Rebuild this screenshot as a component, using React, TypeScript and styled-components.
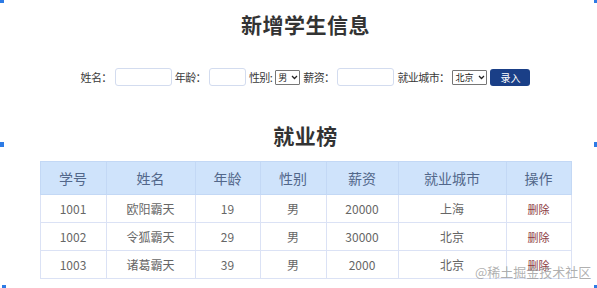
import React from "react";
import { styled, createGlobalStyle } from "styled-components";

type Student = {
  id: string;
  name: string;
  age: number;
  sex: string;
  salary: number;
  city: string;
};

const students: Student[] = [
  { id: "1001", name: "欧阳霸天", age: 19, sex: "男", salary: 20000, city: "上海" },
  { id: "1002", name: "令狐霸天", age: 29, sex: "男", salary: 30000, city: "北京" },
  { id: "1003", name: "诸葛霸天", age: 39, sex: "男", salary: 2000, city: "北京" },
];

const columns = [
  { title: "学号", width: 66 },
  { title: "姓名", width: 89 },
  { title: "年龄", width: 65 },
  { title: "性别", width: 66 },
  { title: "薪资", width: 72 },
  { title: "就业城市", width: 108 },
  { title: "操作", width: 65 },
];

const Chevron = () => (
  <ChevronIcon viewBox="0 0 8 6" width="7" height="5">
    <path d="M1 1.2 L4 4.2 L7 1.2" fill="none" stroke="#222" strokeWidth="1.5" />
  </ChevronIcon>
);

const Dropdown: React.FC<{ width: number; options: string[] }> = ({ width, options }) => (
  <SelectBox $width={width}>
    <Select defaultValue={options[0]}>
      {options.map((o) => (
        <option key={o}>{o}</option>
      ))}
    </Select>
    <Chevron />
  </SelectBox>
);

const App: React.FC = () => {
  return (
    <Page>
      <GlobalStyle />
      <Content>
        <Title>新增学生信息</Title>
        <Form>
          <Label>姓名：</Label>
          <TextInput $width={57} />
          <Label>年龄：</Label>
          <TextInput $width={37} />
          <Label>性别:</Label>
          <Dropdown width={25} options={["男", "女"]} />
          <Label>薪资：</Label>
          <TextInput $width={57} />
          <Label>就业城市：</Label>
          <Dropdown width={35} options={["北京", "上海"]} />
          <SubmitButton>录入</SubmitButton>
        </Form>
        <Title $second>就业榜</Title>
        <Table>
          <colgroup>
            {columns.map((c) => (
              <col key={c.title} style={{ width: c.width }} />
            ))}
          </colgroup>
          <thead>
            <tr>
              {columns.map((c) => (
                <HeadCell key={c.title}>{c.title}</HeadCell>
              ))}
            </tr>
          </thead>
          <tbody>
            {students.map((s) => (
              <tr key={s.id}>
                <Cell>{s.id}</Cell>
                <Cell>{s.name}</Cell>
                <Cell>{s.age}</Cell>
                <Cell>{s.sex}</Cell>
                <Cell>{s.salary}</Cell>
                <Cell>{s.city}</Cell>
                <Cell>
                  <DeleteLink>删除</DeleteLink>
                </Cell>
              </tr>
            ))}
          </tbody>
        </Table>
      </Content>
      <Handle $top={0} $left={0} $w={4} $h={3} />
      <Handle $top={0} $left={594} $w={3} $h={3} />
      <Handle $top={142} $left={0} $w={4} $h={5} />
      <Handle $top={142} $left={594} $w={3} $h={5} />
      <Handle $top={285} $left={2} $w={4} $h={3} />
      <Handle $top={285} $left={594} $w={3} $h={3} />
      <Watermark>@稀土掘金技术社区</Watermark>
    </Page>
  );
};

export default App;

const GlobalStyle = createGlobalStyle`
  html, body {
    margin: 0;
    padding: 0;
    background: #fff;
  }
  body {
    font-family: "Noto Sans CJK SC", "Noto Sans", sans-serif;
  }
`;

const Page = styled.div`
  position: relative;
  width: 597px;
  height: 288px;
  overflow: hidden;
  background: #fff;
`;

const Content = styled.div`
  width: 531px;
  margin-left: 40px;
  display: flex;
  flex-direction: column;
  align-items: center;
`;

const Title = styled.h2<{ $second?: boolean }>`
  margin: ${(p) => (p.$second ? "34px 0 0" : "9px 0 0")};
  height: 30px;
  line-height: 30px;
  font-size: 21px;
  font-weight: 700;
  color: #333;
  letter-spacing: 0.5px;
`;

const Form = styled.div`
  margin-top: 29px;
  display: flex;
  align-items: center;
  gap: 3px;
  height: 18px;
`;

const Label = styled.span`
  font-size: 11px;
  color: #3a3a3a;
  white-space: nowrap;
  letter-spacing: -0.6px;
`;

const TextInput = styled.input<{ $width: number }>`
  box-sizing: border-box;
  width: ${(p) => p.$width}px;
  height: 18px;
  border: 1px solid #d3dcef;
  border-radius: 3px;
  padding: 0 4px;
  outline: none;
`;

const SelectBox = styled.div<{ $width: number }>`
  position: relative;
  flex: none;
  width: ${(p) => p.$width}px;
  height: 15px;
`;

const Select = styled.select`
  display: block;
  appearance: none;
  box-sizing: border-box;
  width: 100%;
  height: 100%;
  margin: 0;
  padding: 0 0 0 2px;
  font-size: 9px;
  line-height: 13px;
  font-family: "Noto Sans CJK SC", sans-serif;
  border: 1px solid #767676;
  border-radius: 1px;
  background: #fff;
  color: #222;
  outline: none;
`;

const ChevronIcon = styled.svg`
  position: absolute;
  right: 2px;
  top: 5px;
  pointer-events: none;
`;

const SubmitButton = styled.button`
  box-sizing: border-box;
  width: 40px;
  height: 17px;
  border: none;
  border-radius: 3px;
  background: #1a3f87;
  color: #fff;
  font-size: 10px;
  font-family: "Noto Sans CJK SC", sans-serif;
  padding: 0;
  line-height: 17px;
`;

const Table = styled.table`
  margin-top: 11px;
  width: 531px;
  border-collapse: collapse;
  table-layout: fixed;
`;

const HeadCell = styled.th`
  height: 32px;
  padding: 0;
  background: #cfe3fb;
  border: 1px solid #c3d8f5;
  font-size: 14px;
  font-weight: 400;
  color: #52678a;
  text-align: center;
`;

const Cell = styled.td`
  height: 27px;
  padding: 0;
  border: 1px solid #dbe2f5;
  font-size: 12px;
  color: #666;
  text-align: center;
`;

const DeleteLink = styled.a`
  color: #8c3b44;
  font-size: 11px;
  cursor: pointer;
`;

const Handle = styled.div<{ $top: number; $left: number; $w: number; $h: number }>`
  position: absolute;
  top: ${(p) => p.$top}px;
  left: ${(p) => p.$left}px;
  width: ${(p) => p.$w}px;
  height: ${(p) => p.$h}px;
  background: #2d7be5;
`;

const Watermark = styled.div`
  position: absolute;
  left: 475px;
  top: 262px;
  font-size: 13px;
  color: rgba(150, 150, 150, 0.75);
  white-space: nowrap;
`;
